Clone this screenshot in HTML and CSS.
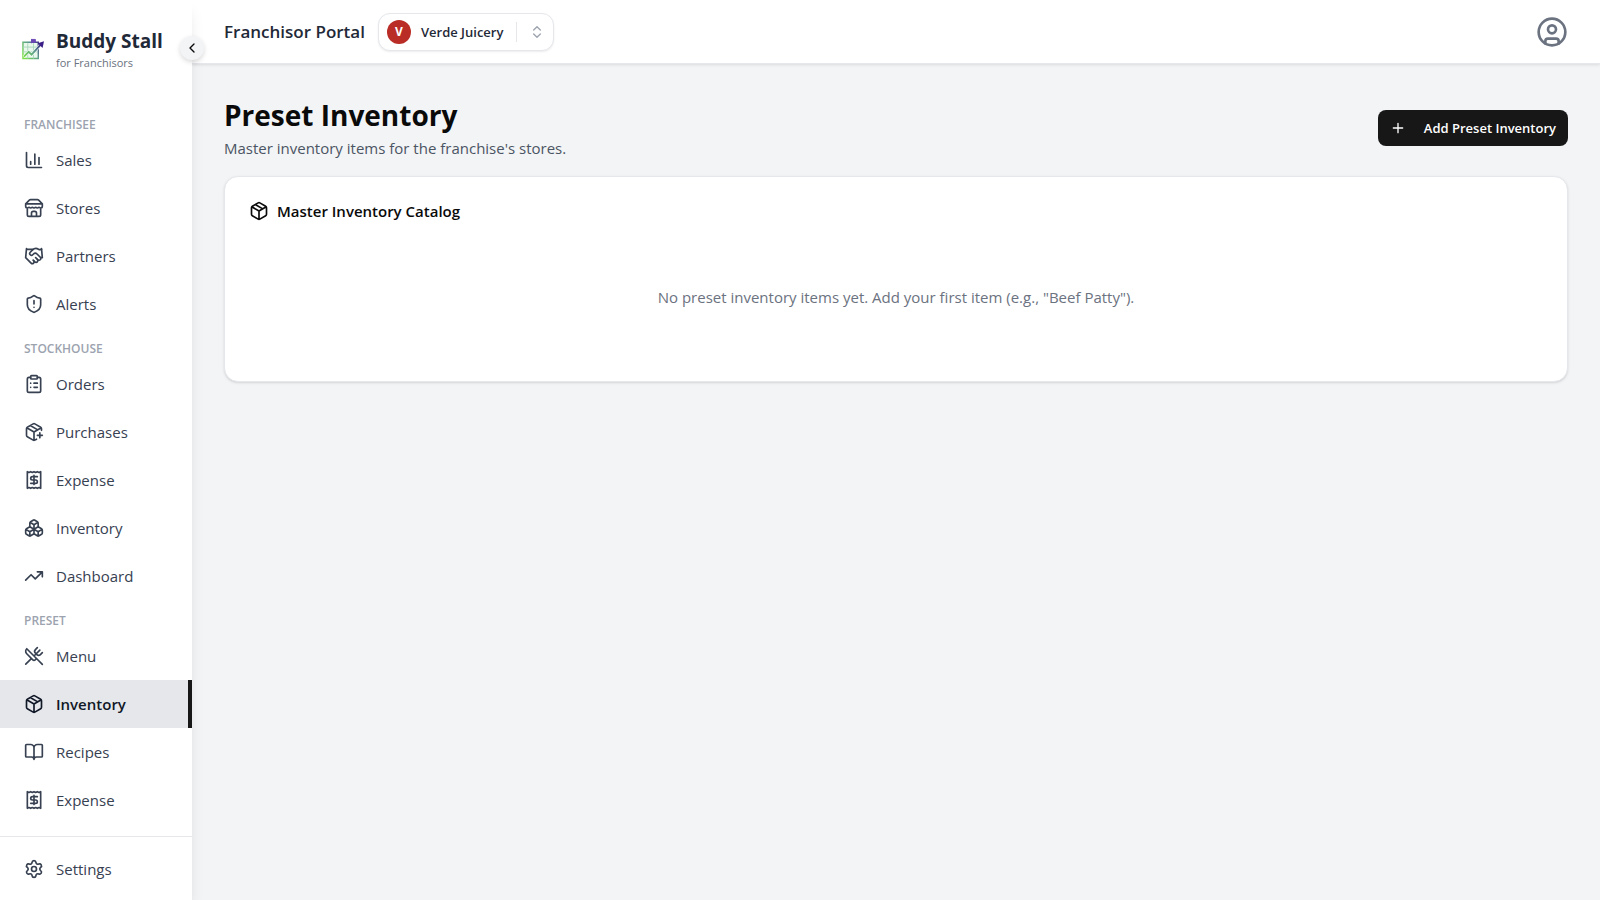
FILE: index.html
```
<!DOCTYPE html>
<html lang="en">

<head>
    <meta charset="UTF-8">
    <meta name="viewport" content="width=device-width, initial-scale=1.0">
    <title>Buddy Stall - Preset Inventory</title>
    <link rel="stylesheet" href="styles.css">
</head>

<body>
    <aside class="sidebar">
        <div class="brand">
            <svg class="brand-logo" viewBox="1 1 23 22" fill="none">
                <defs>
                    <linearGradient id="logo-fade" gradientUnits="userSpaceOnUse" x1="2" y1="20" x2="22" y2="6">
                        <stop offset="0" stop-color="#7be04a" />
                        <stop offset="0.5" stop-color="#5da08c" />
                        <stop offset="1" stop-color="#3b1e87" />
                    </linearGradient>
                </defs>
                <path d="M2 5h16v17H2z" fill="#eaf7ec" stroke="url(#logo-fade)" stroke-width="1.5" />
                <path d="M2 10h15M2 15h15M7 6v16M13 6v16" stroke="#a9d8bd" stroke-width="1" />
                <path d="M11 6V1.500M11 2h4v3h-4z" fill="#6b46b5" stroke="#6b46b5" />
                <path d="M3 20l5-5 3 3 10-11" stroke="white" stroke-width="3" />
                <path d="M3 20l5-5 3 3 10-11" stroke="url(#logo-fade)" stroke-width="2" />
                <path d="M24 4l-1.500 7-5-5z" fill="#3b1e87" />
            </svg>
            <div>
                <div class="brand-name">Buddy Stall</div>
                <div class="brand-sub">for Franchisors</div>
            </div>
        </div>
        <button class="collapse-btn" aria-label="Collapse sidebar">
            <svg class="icon-small" viewBox="0 0 24 24"><path d="m15 18-6-6 6-6" /></svg>
        </button>

        <nav class="nav">
            <div class="nav-label">FRANCHISEE</div>
            <a class="nav-link" href="#sales">
                <svg class="icon" viewBox="0 0 24 24"><path d="M3 3v16a2 2 0 0 0 2 2h16M18 17V9M13 17V5M8 17v-3" /></svg>
                Sales
            </a>
            <a class="nav-link" href="#stores">
                <svg class="icon" viewBox="0 0 24 24"><path d="m2 7 4.410-4.410A2 2 0 0 1 7.830 2h8.340a2 2 0 0 1 1.420.590L22 7M4 12v8a2 2 0 0 0 2 2h12a2 2 0 0 0 2-2v-8M15 22v-4a2 2 0 0 0-2-2h-2a2 2 0 0 0-2 2v4M2 7h20M22 7v3a2 2 0 0 1-2 2a2.700 2.700 0 0 1-1.590-.630.700.700 0 0 0-.820 0A2.700 2.700 0 0 1 16 12a2.700 2.700 0 0 1-1.590-.630.700.700 0 0 0-.820 0A2.700 2.700 0 0 1 12 12a2.700 2.700 0 0 1-1.590-.630.700.700 0 0 0-.820 0A2.700 2.700 0 0 1 8 12a2.700 2.700 0 0 1-1.590-.630.700.700 0 0 0-.820 0A2.700 2.700 0 0 1 4 12a2 2 0 0 1-2-2V7" /></svg>
                Stores
            </a>
            <a class="nav-link" href="#partners">
                <svg class="icon" viewBox="0 0 24 24"><path d="m11 17 2 2a1 1 0 1 0 3-3" /><path d="m14 14 2.500 2.500a1 1 0 1 0 3-3l-3.880-3.880a3 3 0 0 0-4.240 0l-.880.880a1 1 0 1 1-3-3l2.810-2.810a5.790 5.790 0 0 1 7.060-.870l.470.280a2 2 0 0 0 1.420.250L21 4" /><path d="m21 3 1 11h-2M3 3 2 14l6.500 6.500a1 1 0 1 0 3-3M3 4h8" /></svg>
                Partners
            </a>
            <a class="nav-link" href="#alerts">
                <svg class="icon" viewBox="0 0 24 24"><path d="M20 13c0 5-3.500 7.500-7.660 8.950a1 1 0 0 1-.670-.010C7.500 20.500 4 18 4 13V6a1 1 0 0 1 1-1c2 0 4.500-1.200 6.240-2.720a1.170 1.170 0 0 1 1.520 0C14.510 3.810 17 5 19 5a1 1 0 0 1 1 1zM12 8v4M12 16h.010" /></svg>
                Alerts
            </a>

            <div class="nav-label">STOCKHOUSE</div>
            <a class="nav-link" href="#orders">
                <svg class="icon" viewBox="0 0 24 24"><rect width="8" height="4" x="8" y="2" rx="1" /><path d="M16 4h2a2 2 0 0 1 2 2v14a2 2 0 0 1-2 2H6a2 2 0 0 1-2-2V6a2 2 0 0 1 2-2h2M12 11h4M12 16h4M8 11h.010M8 16h.010" /></svg>
                Orders
            </a>
            <a class="nav-link" href="#purchases">
                <svg class="icon" viewBox="0 0 24 24"><path d="M16 16h6M19 13v6M21 10V8a2 2 0 0 0-1-1.730l-7-4a2 2 0 0 0-2 0l-7 4A2 2 0 0 0 3 8v8a2 2 0 0 0 1 1.730l7 4a2 2 0 0 0 2 0l2-1.140M7.500 4.270l9 5.150M3.290 7 12 12l8.710-5M12 22V12" /></svg>
                Purchases
            </a>
            <a class="nav-link" href="#expense">
                <svg class="icon" viewBox="0 0 24 24"><path d="M4 2v20l2-1 2 1 2-1 2 1 2-1 2 1 2-1 2 1V2l-2 1-2-1-2 1-2-1-2 1-2-1-2 1ZM16 8h-6a2 2 0 1 0 0 4h4a2 2 0 1 1 0 4H8M12 17.500v-11" /></svg>
                Expense
            </a>
            <a class="nav-link" href="#inventory">
                <svg class="icon" viewBox="0 0 24 24"><path d="M2.970 12.920A2 2 0 0 0 2 14.630v3.240a2 2 0 0 0 .970 1.710l3 1.800a2 2 0 0 0 2.060 0L12 19v-5.500l-5-3ZM7 16.500l-4.740-2.850M7 16.500l5-3M7 16.500v5.170M12 13.500V19l3.970 2.380a2 2 0 0 0 2.060 0l3-1.800a2 2 0 0 0 .970-1.710v-3.240a2 2 0 0 0-.970-1.710L17 10.500ZM17 16.500l-5-3M17 16.500l4.740-2.850M17 16.500v5.170M7.970 4.420A2 2 0 0 0 7 6.130v4.370l5 3 5-3V6.130a2 2 0 0 0-.970-1.710l-3-1.800a2 2 0 0 0-2.060 0ZM12 8 7.260 5.150M12 8l4.740-2.850M12 13.500V8" /></svg>
                Inventory
            </a>
            <a class="nav-link" href="#dashboard">
                <svg class="icon" viewBox="0 0 24 24"><path d="m22 7-8.500 8.500-5-5L2 17M16 7h6v6" /></svg>
                Dashboard
            </a>

            <div class="nav-label">PRESET</div>
            <a class="nav-link" href="#preset-menu">
                <svg class="icon" viewBox="0 0 24 24"><path d="m16 2-2.300 2.300a3 3 0 0 0 0 4.200l1.800 1.800a3 3 0 0 0 4.200 0L22 8M15 15 3.300 3.300a4.200 4.200 0 0 0 0 6l7.300 7.300c.7.700 2 .7 2.800 0L15 15Zm0 0 7 7M2.100 21.800l6.400-6.300M19 5l-7 7" /></svg>
                Menu
            </a>
            <a class="nav-link nav-link-active" href="#preset-inventory" aria-current="page">
                <svg class="icon" viewBox="0 0 24 24"><path d="M11 21.730a2 2 0 0 0 2 0l7-4A2 2 0 0 0 21 16V8a2 2 0 0 0-1-1.730l-7-4a2 2 0 0 0-2 0l-7 4A2 2 0 0 0 3 8v8a2 2 0 0 0 1 1.730zM12 22V12M3.290 7 12 12l8.710-5M7.500 4.270l9 5.150" /></svg>
                Inventory
            </a>
            <a class="nav-link" href="#preset-recipes">
                <svg class="icon" viewBox="0 0 24 24"><path d="M12 7v14M3 18a1 1 0 0 1-1-1V4a1 1 0 0 1 1-1h5a4 4 0 0 1 4 4 4 4 0 0 1 4-4h5a1 1 0 0 1 1 1v13a1 1 0 0 1-1 1h-6a3 3 0 0 0-3 3 3 3 0 0 0-3-3z" /></svg>
                Recipes
            </a>
            <a class="nav-link" href="#preset-expense">
                <svg class="icon" viewBox="0 0 24 24"><path d="M4 2v20l2-1 2 1 2-1 2 1 2-1 2 1 2-1 2 1V2l-2 1-2-1-2 1-2-1-2 1-2-1-2 1ZM16 8h-6a2 2 0 1 0 0 4h4a2 2 0 1 1 0 4H8M12 17.500v-11" /></svg>
                Expense
            </a>
        </nav>

        <div class="sidebar-footer">
            <a class="nav-link" href="#settings">
                <svg class="icon" viewBox="0 0 24 24"><path d="M9.671 4.136a2.340 2.340 0 0 1 4.659 0 2.340 2.340 0 0 0 3.319 1.915 2.340 2.340 0 0 1 2.330 4.033 2.340 2.340 0 0 0 0 3.831 2.340 2.340 0 0 1-2.330 4.033 2.340 2.340 0 0 0-3.319 1.915 2.340 2.340 0 0 1-4.659 0 2.340 2.340 0 0 0-3.320-1.915 2.340 2.340 0 0 1-2.330-4.033 2.340 2.340 0 0 0 0-3.831A2.340 2.340 0 0 1 6.350 6.051a2.340 2.340 0 0 0 3.319-1.915" /><circle cx="12" cy="12" r="3" /></svg>
                Settings
            </a>
        </div>
    </aside>

    <div class="page">
        <header class="topbar">
            <div class="portal-name">Franchisor Portal</div>
            <button class="brand-switcher">
                <span class="avatar">V</span>
                <span>Verde Juicery</span>
                <span class="switcher-arrows">
                    <svg class="icon-small" viewBox="0 0 24 24"><path d="m7 15 5 5 5-5M7 9l5-5 5 5" /></svg>
                </span>
            </button>
            <button class="profile-btn" aria-label="Profile">
                <svg class="icon-profile" viewBox="0 0 24 24"><circle cx="12" cy="12" r="10" /><circle cx="12" cy="10" r="3" /><path d="M7 20.662V19a2 2 0 0 1 2-2h6a2 2 0 0 1 2 2v1.662" /></svg>
            </button>
        </header>

        <main class="content">
            <div class="page-head">
                <div>
                    <h1 class="page-title">Preset Inventory</h1>
                    <p class="page-sub">Master inventory items for the franchise's stores.</p>
                </div>
                <button class="add-btn">
                    <svg class="icon-small" viewBox="0 0 24 24"><path d="M5 12h14M12 5v14" /></svg>
                    Add Preset Inventory
                </button>
            </div>

            <section class="card">
                <h2 class="card-title">
                    <svg class="icon" viewBox="0 0 24 24"><path d="M11 21.730a2 2 0 0 0 2 0l7-4A2 2 0 0 0 21 16V8a2 2 0 0 0-1-1.730l-7-4a2 2 0 0 0-2 0l-7 4A2 2 0 0 0 3 8v8a2 2 0 0 0 1 1.730zM12 22V12M3.290 7 12 12l8.710-5M7.500 4.270l9 5.150" /></svg>
                    Master Inventory Catalog
                </h2>
                <p class="empty">No preset inventory items yet. Add your first item (e.g., "Beef Patty").</p>
            </section>
        </main>
    </div>
</body>

</html>
```
FILE: styles.css
```
* {
    box-sizing: border-box;
}

body {
    margin: 0;
    display: flex;
    min-height: 100vh;
    background-color: #f3f4f6;
    color: #0a0a0a;
    font-family: "Segoe UI", "Open Sans", "Noto Sans", sans-serif;
    font-size: 15px;
    line-height: 24px;
}

h1,
h2,
p {
    margin: 0;
}

button {
    font-family: inherit;
    cursor: pointer;
}

.icon,
.icon-small,
.icon-profile {
    width: 20px;
    height: 20px;
    flex-shrink: 0;
    fill: none;
    stroke: currentColor;
    stroke-width: 2;
    stroke-linecap: round;
    stroke-linejoin: round;
}

.icon-small {
    width: 16px;
    height: 16px;
}

.icon-profile {
    width: 32px;
    height: 32px;
}

/* sidebar */
.sidebar {
    position: relative;
    z-index: 2;
    display: flex;
    flex-direction: column;
    flex-shrink: 0;
    width: 192px;
    background-color: white;
    box-shadow: 0 10px 15px -3px rgba(0, 0, 0, 0.1), 0 4px 6px -4px rgba(0, 0, 0, 0.1);
}

.brand {
    display: flex;
    align-items: center;
    gap: 12px;
    height: 96px;
    padding-top: 2px;
    padding-left: 22px;
}

.brand-logo {
    width: 22px;
    height: 22px;
}

.brand-name {
    color: #1f2937;
    font-size: 19px;
    font-weight: 700;
    line-height: 28px;
}

.brand-sub {
    color: #6b7280;
    font-size: 11px;
    line-height: 16px;
}

.collapse-btn {
    position: absolute;
    top: 36px;
    right: -12px;
    display: flex;
    align-items: center;
    justify-content: center;
    width: 24px;
    height: 24px;
    padding: 0;
    border: none;
    border-radius: 50%;
    background-color: #f3f4f6;
    color: #0a0a0a;
    box-shadow: 0 2px 5px rgba(0, 0, 0, 0.15);
}

.nav {
    flex: 1;
    padding-top: 8px;
}

.nav-label {
    padding: 13px 24px 3px;
    color: #9ca3af;
    font-size: 12px;
    font-weight: 600;
    line-height: 16px;
}

.nav-link {
    display: flex;
    align-items: center;
    gap: 12px;
    height: 48px;
    padding-left: 24px;
    color: #374151;
    text-decoration: none;
}

.nav-link-active {
    border-right: 4px solid #171717;
    background-color: #e5e7eb;
    color: #111827;
    font-weight: 600;
}

.sidebar-footer {
    padding: 8px 0 7px;
    border-top: 1px solid #e5e7eb;
}

/* top bar */
.page {
    flex: 1;
    min-width: 0;
}

.topbar {
    display: flex;
    align-items: center;
    gap: 13px;
    height: 64px;
    padding: 0 32px;
    border-bottom: 1px solid #e5e7eb;
    background-color: white;
    box-shadow: 0 1px 3px rgba(0, 0, 0, 0.1);
}

.portal-name {
    color: #1f2937;
    font-size: 17px;
    font-weight: 600;
}

.brand-switcher {
    display: flex;
    align-items: center;
    gap: 10px;
    height: 38px;
    padding: 0 8px;
    border: 1px solid #e5e7eb;
    border-radius: 12px;
    background-color: white;
    color: #1f2937;
    font-size: 13px;
    font-weight: 600;
    box-shadow: 0 1px 2px rgba(0, 0, 0, 0.08);
}

.avatar {
    width: 24px;
    height: 24px;
    border-radius: 50%;
    background-color: #b92d26;
    color: white;
    font-size: 12px;
    font-weight: 700;
    line-height: 24px;
}

.switcher-arrows {
    display: flex;
    align-items: center;
    height: 20px;
    margin-left: 3px;
    padding-left: 12px;
    border-left: 1px solid #e5e7eb;
    color: #9ca3af;
}

.profile-btn {
    display: flex;
    margin-left: auto;
    padding: 0;
    border: none;
    background: none;
    color: #6b7280;
}

/* main content */
.content {
    padding: 32px;
}

.page-head {
    display: flex;
    align-items: center;
    justify-content: space-between;
    margin-bottom: 16px;
}

.page-title {
    padding-bottom: 2px;
    font-size: 28px;
    font-weight: 700;
    line-height: 38px;
}

.page-sub {
    color: #4b5563;
}

.add-btn {
    display: flex;
    align-items: center;
    gap: 18px;
    height: 36px;
    padding: 0 12px;
    border: none;
    border-radius: 8px;
    background-color: #171717;
    color: white;
    font-size: 13px;
    font-weight: 600;
}

.card {
    padding: 24px;
    border: 1px solid #e5e7eb;
    border-radius: 14px;
    background-color: white;
    box-shadow: 0 1px 3px rgba(0, 0, 0, 0.1), 0 1px 2px -1px rgba(0, 0, 0, 0.1);
}

.card-title {
    display: flex;
    align-items: center;
    gap: 8px;
    font-size: 15px;
    font-weight: 600;
    line-height: 20px;
}

.empty {
    padding: 64px 0 48px;
    color: #6b7280;
    text-align: center;
}
```
